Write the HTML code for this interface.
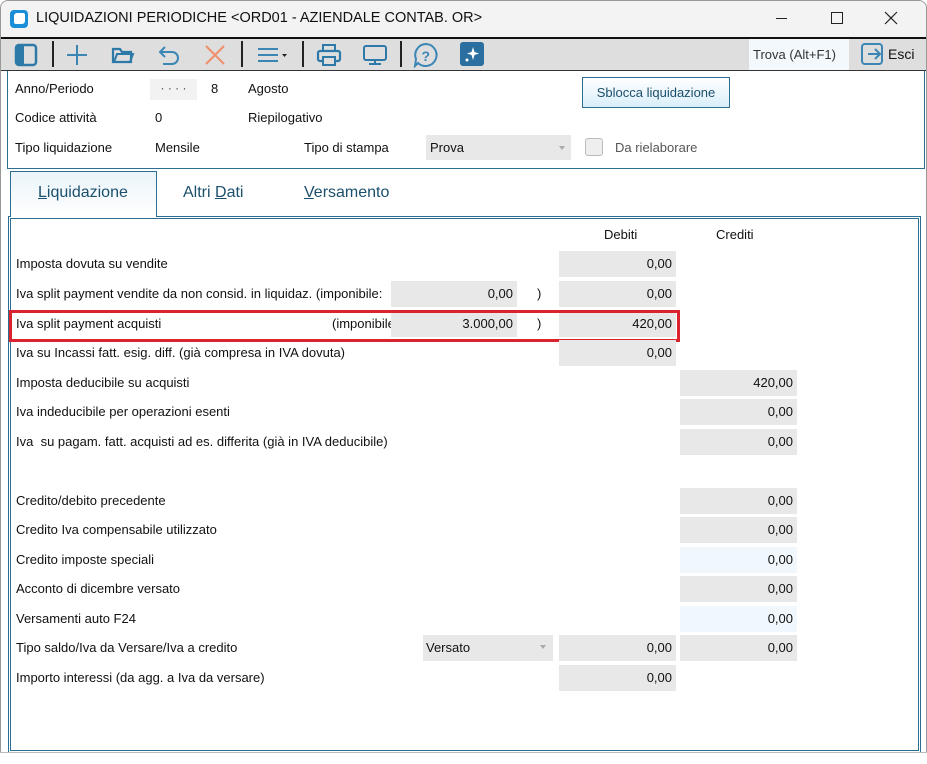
<!DOCTYPE html>
<html><head><meta charset="utf-8"><style>
*{margin:0;padding:0;box-sizing:border-box}
body{width:927px;height:764px;background:#fff;font-family:"Liberation Sans","DejaVu Sans",sans-serif;font-size:13px;color:#111;position:relative;overflow:hidden}
.a{position:absolute;white-space:nowrap}
.t{position:absolute;white-space:nowrap;line-height:14px;font-size:13px}
.f{position:absolute;background:#e8e8e8;height:26px;line-height:26px;text-align:right;padding-right:4px;font-size:13px}
.fb{background:#f0f8fd}
.sep{position:absolute;top:41px;width:2px;height:26px;background:#222}
</style></head><body>
<div class="a" style="left:0;top:0;width:927px;height:758px;border:1px solid #999;border-radius:8px;background:#fff"></div>
<div class="a" style="left:1px;top:1px;width:925px;height:36px;background:#f3f3f3;border-radius:8px 8px 0 0"></div>
<div class="a" style="left:10px;top:10px;width:18px;height:18px;background:#1a8fd8;border-radius:4px"></div>
<div class="a" style="left:14px;top:13px;width:11px;height:11px;background:#fff;border-radius:3px 2px 3px 2px"></div>
<div class="t" style="left:36px;top:11px;font-size:14.5px;color:#111">LIQUIDAZIONI PERIODICHE &lt;ORD01 - AZIENDALE CONTAB. OR&gt;</div>
<div class="a" style="left:776px;top:18px;width:11px;height:1px;background:#222"></div>
<div class="a" style="left:831px;top:12px;width:12px;height:12px;border:1px solid #222"></div>
<svg class="a" style="left:884px;top:11px" width="14" height="14"><path d="M1 1L13 13M13 1L1 13" stroke="#222" stroke-width="1.2"/></svg>
<div class="a" style="left:1px;top:37px;width:925px;height:34px;background:#dedede;border-top:2px solid #111;border-bottom:1px solid #333"></div>
<svg class="a" style="left:14px;top:43px" width="24" height="24"><rect x="2" y="2" width="20" height="20" rx="3" fill="none" stroke="#2d7aa8" stroke-width="2.5"/><rect x="2" y="2" width="8" height="20" rx="2" fill="#2d7aa8"/></svg>
<div class="sep" style="left:52px"></div>
<svg class="a" style="left:65px;top:43px" width="24" height="24"><path d="M12 2V22M2 12H22" stroke="#3b86b5" stroke-width="2"/></svg>
<svg class="a" style="left:111px;top:44px" width="24" height="22"><path d="M2 5H9L11 8H20V18H2Z" fill="none" stroke="#2d7aa8" stroke-width="2.2"/><path d="M3 18L6 10H22L19 18" fill="none" stroke="#2d7aa8" stroke-width="2"/></svg>
<svg class="a" style="left:157px;top:43px" width="24" height="24"><path d="M8 4L3 9L8 14M3 9H15A6 6 0 0 1 15 21H6" fill="none" stroke="#3b86b5" stroke-width="2"/></svg>
<svg class="a" style="left:203px;top:43px" width="24" height="24"><path d="M3 3L21 21M21 3L3 21" stroke="#f08d6a" stroke-width="2"/></svg>
<div class="sep" style="left:241px"></div>
<svg class="a" style="left:256px;top:44px" width="34" height="22"><path d="M2 5H22M2 11H22M2 17H22" stroke="#3b86b5" stroke-width="2"/><path d="M26 10H31L28.5 13Z" fill="#222"/></svg>
<div class="sep" style="left:302px"></div>
<svg class="a" style="left:316px;top:43px" width="26" height="24"><rect x="7" y="2" width="12" height="6" fill="none" stroke="#2d7aa8" stroke-width="2"/><rect x="2" y="8" width="22" height="10" rx="2" fill="none" stroke="#2d7aa8" stroke-width="2.2"/><rect x="7" y="14" width="12" height="8" fill="#dedede" stroke="#2d7aa8" stroke-width="2"/></svg>
<svg class="a" style="left:362px;top:43px" width="26" height="24"><rect x="2" y="3" width="22" height="14" rx="2" fill="none" stroke="#2d7aa8" stroke-width="2"/><path d="M13 17V21M7 21H19" stroke="#2d7aa8" stroke-width="2"/></svg>
<div class="sep" style="left:400px"></div>
<svg class="a" style="left:413px;top:42px" width="26" height="26"><path d="M13 2A11 11 0 1 1 5 21L2 24L3 17A11 11 0 0 1 13 2Z" fill="none" stroke="#3b86b5" stroke-width="2"/><text x="8.5" y="19" font-size="14" font-family="Liberation Sans" fill="#3b86b5" font-weight="bold">?</text></svg>
<svg class="a" style="left:460px;top:42px" width="24" height="24"><rect x="0" y="0" width="24" height="24" rx="3" fill="#2a6fa0"/><path d="M13 5L14.5 10L19 11.5L14.5 13L13 18L11.5 13L7 11.5L11.5 10Z" fill="#fff"/><circle cx="7" cy="18" r="1.5" fill="#fff"/></svg>
<div class="a" style="left:749px;top:39px;width:100px;height:31px;background:#f3f8fc"></div>
<div class="t" style="left:753px;top:48px;color:#333">Trova (Alt+F1)</div>
<svg class="a" style="left:860px;top:42px" width="26" height="24"><rect x="2" y="2" width="20" height="20" rx="3" fill="none" stroke="#3b86b5" stroke-width="2"/><path d="M8 12H20M15 7L20 12L15 17" fill="none" stroke="#3b86b5" stroke-width="2"/></svg>
<div class="t" style="left:888px;top:47px;font-size:14px;color:#111">Esci</div>
<div class="a" style="left:7px;top:71px;width:918px;height:98px;border:1px solid #2c6e8f;border-top:none"></div>
<div class="t" style="left:15px;top:82px">Anno/Periodo</div>
<div class="a" style="left:150px;top:79px;width:47px;height:21px;background:#f2f2f2;text-align:center;line-height:19px;color:#444;font-size:12px">· · · ·</div>
<div class="t" style="left:211px;top:82px">8</div>
<div class="t" style="left:248px;top:82px">Agosto</div>
<div class="t" style="left:15px;top:111px">Codice attività</div>
<div class="t" style="left:155px;top:111px">0</div>
<div class="t" style="left:248px;top:111px">Riepilogativo</div>
<div class="t" style="left:15px;top:141px">Tipo liquidazione</div>
<div class="t" style="left:155px;top:141px">Mensile</div>
<div class="t" style="left:304px;top:141px">Tipo di stampa</div>
<div class="a" style="left:426px;top:135px;width:145px;height:25px;background:#e8e8e8"></div>
<div class="t" style="left:430px;top:141px">Prova</div>
<div class="a" style="left:559px;top:146px;border:3px solid transparent;border-top:4px solid #aaa"></div>
<div class="a" style="left:585px;top:138px;width:18px;height:18px;border:1px solid #bbb;border-radius:3px;background:#eee"></div>
<div class="t" style="left:615px;top:141px;color:#555">Da rielaborare</div>
<div class="a" style="left:582px;top:77px;width:148px;height:31px;border:1px solid #2c6e8f;background:linear-gradient(#fff,#d9eefa);text-align:center;line-height:29px;color:#1c4f6c">Sblocca liquidazione</div>
<div class="a" style="left:10px;top:171px;width:147px;height:46px;border:1px solid #2c6e8f;border-bottom:none;background:linear-gradient(#eaf4fa,#fff);z-index:2"></div>
<div class="t" style="left:38px;top:186px;font-size:16px;color:#1c4f6c;z-index:3"><u>L</u>iquidazione</div>
<div class="t" style="left:183px;top:186px;font-size:16px;color:#1c4f6c">Altri <u>D</u>ati</div>
<div class="t" style="left:304px;top:186px;font-size:16px;color:#1c4f6c"><u>V</u>ersamento</div>
<div class="a" style="left:8px;top:216px;width:913px;height:537px;border:3px double #2c6e8f"></div>
<div class="a" style="left:0;top:752px;width:927px;height:6px;background:#fff;border-top:1px solid #bbb"></div>
<div class="t" style="left:604px;top:228px">Debiti</div>
<div class="t" style="left:716px;top:228px">Crediti</div>

<div class="t" style="left:16px;top:257px">Imposta dovuta su vendite</div>
<div class="f" style="left:559px;top:251px;width:117px">0,00</div>

<div class="t" style="left:16px;top:287px">Iva split payment vendite da non consid. in liquidaz. (imponibile:</div>
<div class="f" style="left:391px;top:281px;width:126px">0,00</div>
<div class="t" style="left:537px;top:287px">)</div>
<div class="f" style="left:559px;top:281px;width:117px">0,00</div>

<div class="t" style="left:16px;top:317px">Iva split payment acquisti</div>
<div class="t" style="left:332px;top:317px">(imponibile</div>
<div class="f" style="left:391px;top:311px;width:126px">3.000,00</div>
<div class="t" style="left:537px;top:317px">)</div>
<div class="f" style="left:559px;top:311px;width:117px">420,00</div>
<div class="a" style="left:9px;top:310px;width:671px;height:32px;border:3px solid #d9232e"></div>

<div class="t" style="left:16px;top:346px">Iva su Incassi fatt. esig. diff. (già compresa in IVA dovuta)</div>
<div class="f" style="left:559px;top:340px;width:117px">0,00</div>

<div class="t" style="left:16px;top:376px">Imposta deducibile su acquisti</div>
<div class="f" style="left:680px;top:370px;width:117px">420,00</div>
<div class="t" style="left:16px;top:405px">Iva indeducibile per operazioni esenti</div>
<div class="f" style="left:680px;top:399px;width:117px">0,00</div>
<div class="t" style="left:16px;top:435px">Iva &nbsp;su pagam. fatt. acquisti ad es. differita (già in IVA deducibile)</div>
<div class="f" style="left:680px;top:429px;width:117px">0,00</div>

<div class="t" style="left:16px;top:494px">Credito/debito precedente</div>
<div class="f" style="left:680px;top:488px;width:117px">0,00</div>
<div class="t" style="left:16px;top:523px">Credito Iva compensabile utilizzato</div>
<div class="f" style="left:680px;top:517px;width:117px">0,00</div>
<div class="t" style="left:16px;top:553px">Credito imposte speciali</div>
<div class="f fb" style="left:680px;top:547px;width:117px">0,00</div>
<div class="t" style="left:16px;top:582px">Acconto di dicembre versato</div>
<div class="f" style="left:680px;top:576px;width:117px">0,00</div>
<div class="t" style="left:16px;top:612px">Versamenti auto F24</div>
<div class="f fb" style="left:680px;top:606px;width:117px">0,00</div>

<div class="t" style="left:16px;top:641px">Tipo saldo/Iva da Versare/Iva a credito</div>
<div class="a" style="left:423px;top:635px;width:130px;height:26px;background:#e8e8e8"></div>
<div class="t" style="left:426px;top:641px">Versato</div>
<div class="a" style="left:540px;top:645px;border:3px solid transparent;border-top:4px solid #aaa"></div>
<div class="f" style="left:559px;top:635px;width:117px">0,00</div>
<div class="f" style="left:680px;top:635px;width:117px">0,00</div>

<div class="t" style="left:16px;top:671px">Importo interessi (da agg. a Iva da versare)</div>
<div class="f" style="left:559px;top:665px;width:117px">0,00</div>
</body></html>
